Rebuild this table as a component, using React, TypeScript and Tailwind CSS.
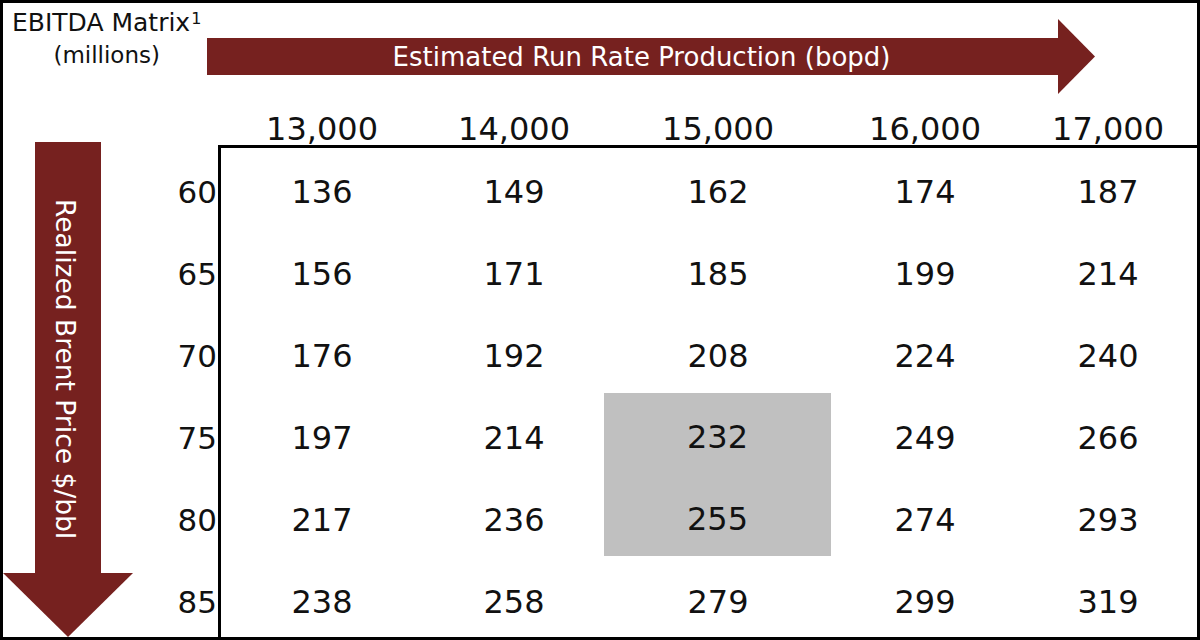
const prices = ["60", "65", "70", "75", "80", "85"];
const volumes = ["13,000", "14,000", "15,000", "16,000", "17,000"];

const matrix = [
  ["136", "149", "162", "174", "187"],
  ["156", "171", "185", "199", "214"],
  ["176", "192", "208", "224", "240"],
  ["197", "214", "232", "249", "266"],
  ["217", "236", "255", "274", "293"],
  ["238", "258", "279", "299", "319"],
];

const cols = "grid grid-cols-[202px_182px_226px_188px_178px]";

const App = () => {
  return (
    <div className="w-[1200px] h-[640px] bg-white border-[3px] border-black overflow-hidden flex flex-col font-['DejaVu_Sans',sans-serif] text-[#111]">
      {/* Header: title + production arrow */}
      <div className="h-[97px] shrink-0 flex">
        <div className="w-[204px] shrink-0 pl-[9px] pt-[7px]">
          <div className="inline-flex flex-col items-center whitespace-nowrap">
            <div className="flex items-start">
              <span className="text-[25px] leading-none">EBITDA Matrix</span>
              <span className="text-[16px] leading-none mt-[1px] ml-[1px]">1</span>
            </div>
            <span className="text-[23px] leading-none mt-[9px]">(millions)</span>
          </div>
        </div>
        <div className="flex items-center mt-[16px] h-[75px]">
          <div className="w-[851px] h-[37px] bg-[#76211f] flex items-center justify-center pl-[18px]">
            <span className="text-white text-[26px] leading-none whitespace-nowrap">
              Estimated Run Rate Production (bopd)
            </span>
          </div>
          <svg width="37" height="75" viewBox="0 0 37 75" className="block">
            <polygon points="0,0 37,37.5 0,75" fill="#76211f" />
          </svg>
        </div>
      </div>

      {/* Body */}
      <div className="flex-1 min-h-0 flex">
        {/* Price arrow + row labels */}
        <div className="w-[215px] shrink-0 flex">
          <div className="w-[130px] shrink-0 pt-[42px] flex flex-col items-center">
            <div className="w-[66px] h-[431px] bg-[#76211f] flex justify-center pr-[7px] pt-[57px]">
              <span className="text-white text-[26.5px] leading-none whitespace-nowrap [writing-mode:vertical-rl]">
                Realized Brent Price $/bbl
              </span>
            </div>
            <svg width="130" height="64" viewBox="0 0 130 64" className="block">
              <polygon points="0,0 130,0 65,64" fill="#76211f" />
            </svg>
          </div>
          <div className="flex-1 pt-[51px] flex flex-col">
            {prices.map((p) => (
              <div key={p} className="h-[82px] shrink-0 flex items-center justify-end pr-[1px] text-[31px] leading-none">
                {p}
              </div>
            ))}
          </div>
        </div>

        {/* Column headers + matrix */}
        <div className="flex-1 min-w-0 flex flex-col">
          <div className={`${cols} h-[45px] shrink-0 pl-[3px]`}>
            {volumes.map((v) => (
              <div key={v} className="flex items-end justify-center text-[32px] leading-none">
                {v}
              </div>
            ))}
          </div>
          <div className="flex-1 min-h-0 border-l-[3px] border-t-[3px] border-black overflow-hidden pt-[3px]">
            <div className={`${cols} auto-rows-[82px]`}>
              <div className="col-start-3 row-start-4 row-span-2 self-start -mt-[4px] -ml-[1px] h-[163px] bg-[#c0c0c0] flex flex-col pt-[3px]">
                <div className="h-[82px] shrink-0 flex items-center justify-center text-[32px] leading-none">232</div>
                <div className="h-[82px] shrink-0 flex items-center justify-center text-[32px] leading-none">255</div>
              </div>
              {matrix.map((row, r) =>
                row.map((val, c) =>
                  c === 2 && (r === 3 || r === 4) ? null : (
                    <div key={`${r}-${c}`} className="flex items-center justify-center text-[32px] leading-none">
                      {val}
                    </div>
                  )
                )
              )}
            </div>
          </div>
        </div>
      </div>
    </div>
  );
};

export default App;
